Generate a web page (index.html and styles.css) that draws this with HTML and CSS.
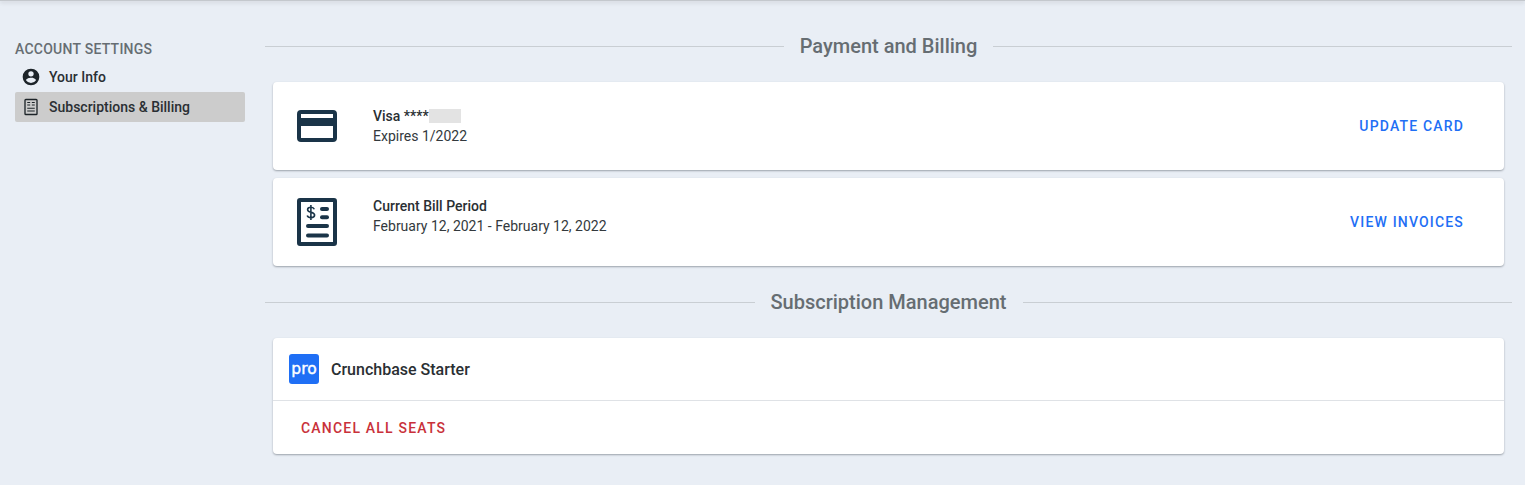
FILE: index.html
```html
<!DOCTYPE html>
<html lang="en">
<head>
<meta charset="utf-8">
<title>Subscriptions &amp; Billing</title>
<link rel="stylesheet" href="styles.css">
</head>
<body>
<div class="topbar"></div>
<div class="layout">
  <nav class="side">
    <div class="side-title">ACCOUNT SETTINGS</div>
    <a class="side-item">
      <svg class="side-icon" viewBox="0 0 24 24"><path fill="#1d2429" fill-rule="evenodd" d="M12 2a10 10 0 1 0 0 20 10 10 0 0 0 0-20zm0 3a3.2 3.2 0 1 1 0 6.4A3.2 3.2 0 0 1 12 5zm0 14.2a7.2 7.2 0 0 1-6-3.22c.03-2 4-3.08 6-3.08s5.97 1.09 6 3.08a7.2 7.2 0 0 1-6 3.22z"/></svg>
      <span>Your Info</span>
    </a>
    <a class="side-item active">
      <svg class="side-icon" viewBox="0 0 24 24"><rect x="4.8" y="3" width="14.4" height="18" rx="1" fill="none" stroke="#1d2429" stroke-width="1.6"/><path d="M7.5 6.6h3.5M7.5 9.6h3.5M13 6.6h3.5M13 9.6h3.5M7.5 13.4h9M7.5 16.8h9" stroke="#1d2429" stroke-width="1.3" fill="none"/></svg>
      <span>Subscriptions &amp; Billing</span>
    </a>
  </nav>
  <main class="content">
    <div class="divider first"><span>Payment and Billing</span></div>
    <section class="card row">
      <div class="icon-cell">
        <svg class="card-icon" width="40" height="32" viewBox="0 0 40 32"><path fill="#1a3448" fill-rule="evenodd" d="M4 0h32a4 4 0 0 1 4 4v24a4 4 0 0 1-4 4H4a4 4 0 0 1-4-4V4a4 4 0 0 1 4-4zM4 4v4h32V4zM4 16v12h32V16z"/></svg>
      </div>
      <div class="info">
        <div class="strong">Visa ****<span class="redact"></span></div>
        <div>Expires 1/2022</div>
      </div>
      <a class="action">UPDATE CARD</a>
    </section>
    <section class="card row">
      <div class="icon-cell">
        <svg class="card-icon" width="40" height="48" viewBox="0 0 40 48"><path fill="#1a3448" fill-rule="evenodd" d="M3 0h34a3 3 0 0 1 3 3v42a3 3 0 0 1-3 3H3a3 3 0 0 1-3-3V3a3 3 0 0 1 3-3zM4 4v40h32V4z"/><rect x="23" y="9" width="9" height="4" rx="2" fill="#1a3448"/><rect x="23" y="17.3" width="9" height="4" rx="2" fill="#1a3448"/><rect x="9" y="26" width="23" height="4" rx="2" fill="#1a3448"/><rect x="9" y="35.4" width="23" height="4" rx="2" fill="#1a3448"/><path d="M17.3 11.2c-.5-1.3-1.7-2-3.4-2-1.9 0-3.3 1-3.3 2.5 0 3.5 7 1.7 7 5.4 0 1.6-1.5 2.6-3.6 2.6-1.9 0-3.3-.8-3.8-2.2M13.9 7v15" fill="none" stroke="#1a3448" stroke-width="1.6"/></svg>
      </div>
      <div class="info raised">
        <div class="strong">Current Bill Period</div>
        <div>February 12, 2021 - February 12, 2022</div>
      </div>
      <a class="action">VIEW INVOICES</a>
    </section>
    <div class="divider second"><span>Subscription Management</span></div>
    <section class="card sub">
      <div class="sub-head">
        <div class="pro">pro</div>
        <div class="sub-name">Crunchbase Starter</div>
      </div>
      <div class="sub-foot"><a class="cancel">CANCEL ALL SEATS</a></div>
    </section>
  </main>
</div>
</body>
</html>
```
FILE: styles.css
```css
* { box-sizing: border-box; }
html, body { margin: 0; height: 100%; }
body {
  background: #e9eef5;
  font-family: Roboto, "Liberation Sans", sans-serif;
  color: #1d2429;
  overflow: hidden;
}
.topbar {
  height: 1px;
  background: #c4c8cd;
  box-shadow: 0 1px 4px rgba(0, 0, 0, .3);
}
.layout {
  display: flex;
  padding: 0 13px 0 15px;
}
.side {
  width: 230px;
  flex: none;
  padding-top: 40px;
}
.side-title {
  font-size: 14px;
  font-weight: 500;
  line-height: 16px;
  letter-spacing: .25px;
  color: #666d72;
  margin-bottom: 5px;
}
.side-item {
  display: flex;
  align-items: center;
  height: 30px;
  padding-left: 6px;
  border-radius: 2px;
  font-size: 14px;
  font-weight: 500;
  color: #2a2f33;
}
.side-item.active { background: #cccccc; }
.side-icon { width: 20px; height: 20px; margin-right: 8px; flex: none; }
.content {
  flex: 1;
  margin-left: 20px;
  min-width: 0;
}
.divider {
  display: flex;
  align-items: center;
  gap: 16px;
  font-size: 20px;
  font-weight: 500;
  line-height: 24px;
  color: #666d72;
}
.divider::before, .divider::after {
  content: "";
  flex: 1;
  height: 1px;
  background: #c9ced3;
}
.divider.first { margin-top: 33px; margin-bottom: 24px; }
.divider.second { margin-top: 24px; margin-bottom: 24px; }
.card {
  background: #fff;
  border-radius: 4px;
  margin: 0 8px;
  box-shadow: 0 1px 2px rgba(40, 50, 60, .4);
}
.row {
  display: flex;
  align-items: center;
  height: 88px;
  margin-bottom: 8px;
}
.icon-cell {
  width: 100px;
  padding-left: 24px;
  display: flex;
  flex: none;
}
.info {
  flex: 1;
  font-size: 14px;
  line-height: 20px;
  color: #33393d;
}
.info.raised { padding-bottom: 12px; }
.strong { font-weight: 500; color: #2a2f33; display: flex; align-items: center; }
.redact { display: inline-block; width: 32px; height: 14px; background: #e3e3e3; }
.action {
  margin-right: 40px;
  font-size: 14px;
  font-weight: 500;
  letter-spacing: 1.17px;
  color: #1f6ff5;
}
.sub-head {
  display: flex;
  align-items: center;
  height: 63px;
  padding-left: 16px;
  border-bottom: 1px solid #dfe2e6;
}
.pro {
  width: 30px;
  height: 30px;
  border-radius: 3px;
  background: #1f6ff5;
  color: #fff;
  font-family: "DejaVu Sans", Roboto, sans-serif;
  font-size: 15.5px;
  line-height: 30px;
  -webkit-text-stroke: .4px #fff;
  text-align: center;
  margin-right: 12px;
}
.sub-name { font-size: 16px; font-weight: 500; color: #2a2f33; }
.sub-foot {
  height: 53px;
  display: flex;
  align-items: center;
  padding-left: 28px;
}
.cancel {
  font-size: 14px;
  font-weight: 500;
  letter-spacing: 1.2px;
  color: #c9313a;
}
```
